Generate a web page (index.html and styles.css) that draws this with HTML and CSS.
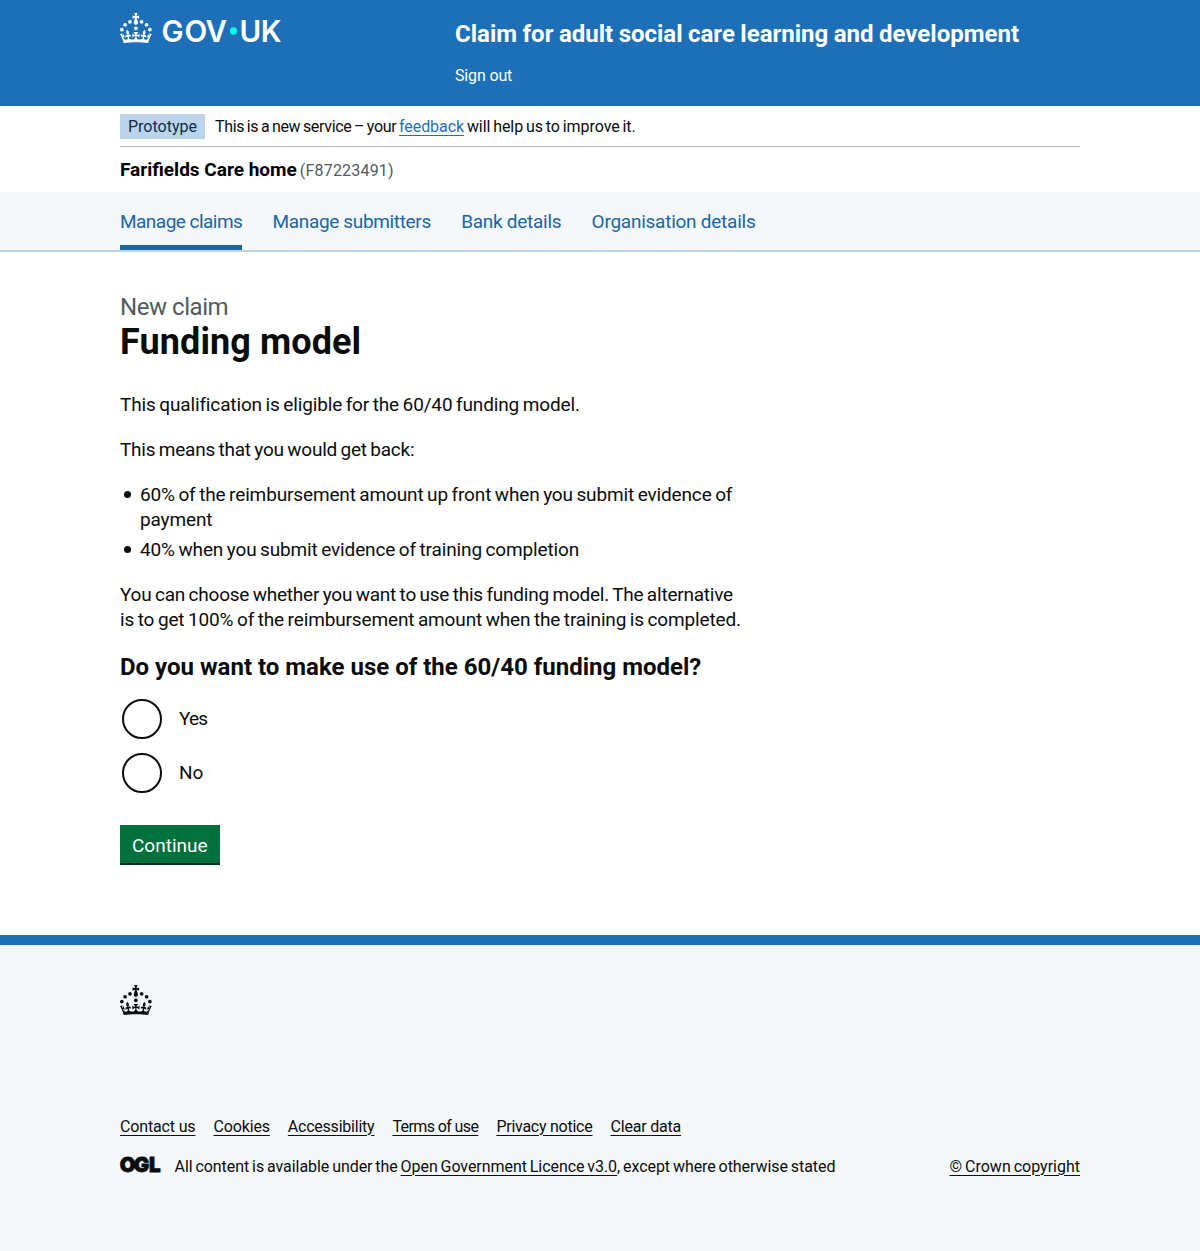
FILE: index.html
```html
<!DOCTYPE html>
<html lang="en">
<head>
<meta charset="utf-8">
<title>Funding model – Claim for adult social care learning and development</title>
<link rel="stylesheet" href="styles.css">
</head>
<body>
<svg class="sprite" aria-hidden="true">
  <symbol id="crown" viewBox="0 0 64 60" overflow="visible">
    <circle cx="20" cy="17.6" r="3.7"/>
    <circle cx="10.2" cy="23.5" r="3.7"/>
    <circle cx="3.7" cy="33.2" r="3.7"/>
    <circle cx="31.7" cy="30.6" r="3.7"/>
    <circle cx="43.3" cy="17.6" r="3.7"/>
    <circle cx="53.2" cy="23.5" r="3.7"/>
    <circle cx="59.7" cy="33.2" r="3.7"/>
    <path d="M33.1,9.8c.2-.1.3-.3.5-.5l4.6,2.4v-6.8l-4.6,1.5c-.1-.2-.3-.3-.5-.5l1.9-5.9h-6.7l1.9,5.9c-.2.1-.3.3-.5.5l-4.6-1.5v6.8l4.6-2.4c.1.2.3.3.5.5l-2.6,8c-.9,2.8,1.2,5.7,4.1,5.7h0c3,0,5.1-2.9,4.1-5.7l-2.6-8ZM37,37.9s-3.4,3.8-4.1,6.1c2.2,0,4.2-.5,6.4-2.8l-.7,8.5c-2-2.8-4.4-4.1-5.7-3.8.1,3.1.5,6.7,5.8,7.2,3.7.3,6.7-1.5,7-3.8.4-2.6-2-4.3-3.7-1.6-1.4-4.5,2.4-6.1,4.9-3.2-1.9-4.5-1.8-7.7,2.4-10.9,3,4,2.6,7.3-1.2,11.1,2.4-1.3,6.2,0,4,4.6-1.2-2.8-3.7-2.2-4.2.2-.3,1.7.7,3.7,3,4.2,1.9.3,4.7-.9,7-5.9-1.3,0-2.4.7-3.9,1.7l2.4-8c.6,2.3,1.4,3.7,2.2,4.5.6-1.6.5-2.8,0-5.3l5,1.8c-2.6,3.6-5.2,8.7-7.3,17.5-7.4-1.1-15.7-1.7-24.5-1.7h0c-8.8,0-17.1.6-24.5,1.7-2.1-8.9-4.7-13.9-7.3-17.5l5-1.8c-.5,2.5-.6,3.7,0,5.3.8-.8,1.6-2.3,2.2-4.5l2.4,8c-1.5-1-2.6-1.7-3.9-1.7,2.3,5,5.2,6.2,7,5.9,2.3-.4,3.3-2.4,3-4.2-.5-2.4-3-3.1-4.2-.2-2.2-4.6,1.6-6,4-4.6-3.7-3.7-4.2-7.1-1.2-11.1,4.2,3.2,4.3,6.4,2.4,10.9,2.5-2.8,6.3-1.3,4.9,3.2-1.8-2.7-4.1-1-3.7,1.6.3,2.3,3.3,4.1,7,3.8,5.4-.5,5.7-4.2,5.8-7.2-1.3-.2-3.7,1-5.7,3.8l-.7-8.5c2.2,2.3,4.2,2.7,6.4,2.8-.7-2.3-4.1-6.1-4.1-6.1h10.6Z"/>
  </symbol>
</svg>

<header class="header">
  <div class="container header-row">
    <a class="logo" href="#" aria-label="GOV.UK">
      <svg class="logo-svg" viewBox="0 0 324 60" width="162" height="30">
        <use href="#crown" width="64" height="60"/>
        <text class="logo-text" y="57.5" x="83 129 171 239 281.5">GOVUK</text>
        <circle class="logo-dot" cx="227" cy="36" r="7.3"/>
      </svg>
    </a>
    <div class="header-content">
      <a class="service-name" href="#">Claim for adult social care learning and development</a>
      <a class="sign-out" href="#">Sign out</a>
    </div>
  </div>
</header>

<div class="container">
  <div class="phase">
    <strong class="tag">Prototype</strong>
    <span class="phase-text"><span class="phase-lead">This is a new service – your </span><a href="#">feedback</a> will help us to improve it.</span>
  </div>
  <div class="organisation"><strong>Farifields Care home</strong><span class="org-code">(F87223491)</span></div>
</div>

<nav class="nav">
  <ul class="container nav-list">
    <li><a class="nav-link nav-current" href="#">Manage claims</a></li>
    <li><a class="nav-link" href="#">Manage submitters</a></li>
    <li><a class="nav-link" href="#">Bank details</a></li>
    <li><a class="nav-link" href="#">Organisation details</a></li>
  </ul>
</nav>

<main class="container main">
  <div class="two-thirds">
    <h1><span class="caption">New claim</span>Funding model</h1>
    <p>This qualification is eligible for the 60/40 funding model.</p>
    <p class="tight">This means that you would get back:</p>
    <ul class="bullets">
      <li>60% of the reimbursement amount up front when you submit evidence of payment</li>
      <li>40% when you submit evidence of training completion</li>
    </ul>
    <p class="choice">You can choose whether you want to use this funding model. The alternative is to get 100% of the reimbursement amount when the training is completed.</p>
    <form>
      <fieldset>
        <legend>Do you want to make use of the 60/40 funding model?</legend>
        <label class="radio"><input type="radio" name="model"><span class="yes">Yes</span></label>
        <label class="radio"><input type="radio" name="model"><span>No</span></label>
      </fieldset>
      <button class="button" type="button">Continue</button>
    </form>
  </div>
</main>

<footer class="footer">
  <div class="container">
    <svg class="footer-crown" width="32" height="30"><use href="#crown" width="32" height="30"/></svg>
    <ul class="footer-links">
      <li><a href="#">Contact us</a></li>
      <li><a href="#">Cookies</a></li>
      <li><a href="#">Accessibility</a></li>
      <li><a href="#">Terms of use</a></li>
      <li><a href="#">Privacy notice</a></li>
      <li><a href="#">Clear data</a></li>
    </ul>
    <div class="footer-meta">
      <svg class="ogl" width="41" height="17" viewBox="0 0 41 17"><text class="ogl-text" x="-0.3 13.8 28.9" y="15.8">OGL</text></svg>
      <span class="licence">All content is available under the <a href="#">Open Government Licence v3.0</a>, except where otherwise stated</span>
      <a class="copyright" href="#">© Crown copyright</a>
    </div>
  </div>
</footer>
</body>
</html>
```
FILE: styles.css
```css
* { box-sizing: border-box; }

body {
  margin: 0;
  background: #fff;
  color: #0b0c0c;
  font-family: Roboto, "Liberation Sans", sans-serif;
  font-size: 19px;
  line-height: 25px;
}

ul { list-style: none; margin: 0; padding: 0; }

.sprite { display: none; }

.container { width: 960px; margin: 0 auto; }

/* Header */
.header { height: 106px; background: #1d70b8; color: #fff; }
.header a { color: #fff; text-decoration: none; }
.header-row { display: flex; }
.logo { width: 335px; padding-top: 13px; }
.logo-svg { display: block; overflow: visible; fill: #fff; }
.logo-text { font-family: Inter, sans-serif; font-weight: 600; font-size: 59px; }
.logo-dot { fill: #00ffe0; }
.header-content { display: flex; flex-direction: column; padding-top: 19px; }
.service-name { font-size: 24px; font-weight: 700; line-height: 30px; word-spacing: -0.5px; }
.sign-out { margin-top: 17px; font-size: 16px; line-height: 20px; letter-spacing: -0.15px; }

/* Phase banner */
.phase {
  display: flex;
  align-items: center;
  gap: 10px;
  height: 41px;
  border-bottom: 1px solid #b1b4b6;
  font-size: 16px;
}
.tag { padding: 0 8px; background: #bbd4ea; color: #0c2d4a; font-weight: 400; line-height: 25px; }
.phase-text { letter-spacing: -0.07px; word-spacing: -1px; }
.phase-lead { letter-spacing: -0.33px; }
.phase-text a { color: #1d70b8; text-underline-offset: 3px; text-decoration-thickness: 1px; }
.organisation { display: flex; align-items: baseline; gap: 3px; height: 45px; padding-top: 10px; color: #000; }
.org-code { color: #505a5f; font-size: 16px; letter-spacing: 0.2px; }

/* Navigation */
.nav { height: 60px; background: #f4f8fb; border-bottom: 2px solid #bbd4ea; }
.nav-list { display: flex; gap: 30.3px; height: 100%; }
.nav-link {
  display: block;
  height: 58px;
  padding-top: 17px;
  color: #1a65a6;
  text-decoration: none;
  letter-spacing: -0.35px;
}
.nav-current { letter-spacing: -0.53px; border-bottom: 5px solid #1a65a6; }
.nav-list li:nth-child(3) .nav-link { letter-spacing: -0.27px; }
.nav-list li:last-child .nav-link { letter-spacing: -0.25px; }

/* Content */
.main { height: 682.5px; padding-top: 40px; }
.two-thirds { width: 630px; }
h1 { margin: 0 0 30px; font-size: 36px; line-height: 40px; letter-spacing: 0.1px; }
.caption {
  display: block;
  color: #505a5f;
  font-size: 24px;
  font-weight: 400;
  line-height: 30px;
  letter-spacing: -0.45px;
}
p { margin: 0 0 20px; }
p, .bullets { letter-spacing: -0.14px; word-spacing: -1px; }
.tight { letter-spacing: -0.23px; }
.choice { width: 625px; }
.choice::first-line { letter-spacing: -0.22px; }
.bullets { margin-bottom: 20px; }
.bullets li { display: flex; }
.bullets li::before {
  content: "";
  flex: none;
  width: 7px;
  height: 7px;
  margin: 9px 9px 0 4px;
  border-radius: 50%;
  background: #0b0c0c;
}
.bullets li + li { margin-top: 5px; }
fieldset { margin: 0 0 32px; padding: 0; border: 0; }
legend { margin-bottom: 16.5px; padding: 0; font-size: 24px; font-weight: 700; line-height: 30px; }
.radio { display: flex; align-items: center; gap: 17px; height: 40px; padding-left: 2px; }
.radio + .radio { margin-top: 14px; }
.yes { letter-spacing: -0.8px; }
.radio input {
  appearance: none;
  width: 40px;
  height: 40px;
  margin: 0;
  border: 2px solid #0b0c0c;
  border-radius: 50%;
}
.button {
  display: block;
  height: 40px;
  padding: 1px 12px 0;
  border: 0;
  background: #00703c;
  box-shadow: inset 0 -2px 0 #002d18;
  color: #fff;
  font: inherit;
}

/* Footer */
.footer { height: 316.5px; padding-top: 40px; background: #f4f8fb; border-top: 10px solid #1d70b8; font-size: 16px; line-height: 20px; }
.footer a { color: inherit; text-underline-offset: 3px; text-decoration-thickness: 1px; }
.footer-crown { display: block; overflow: visible; fill: #0b0c0c; }
.footer-links { display: flex; gap: 18px; margin-top: 102px; letter-spacing: -0.15px; }
.footer-links li:nth-child(3) { letter-spacing: -0.23px; }
.footer-links li:nth-child(4) { letter-spacing: -0.6px; }
.footer-links li:nth-child(5) { letter-spacing: -0.25px; }
.footer-links li:nth-child(6) { letter-spacing: -0.2px; }
.footer-meta { display: flex; margin-top: 20px; }
.ogl { overflow: visible; margin: -1px 13.5px 0 0; fill: #0b0c0c; }
.ogl-text { font-family: Inter, sans-serif; font-weight: 900; font-size: 20.5px; stroke: #0b0c0c; stroke-width: 0.8px; }
.licence { letter-spacing: -0.06px; word-spacing: -1px; }
.copyright { margin-left: auto; word-spacing: -1px; }
```
